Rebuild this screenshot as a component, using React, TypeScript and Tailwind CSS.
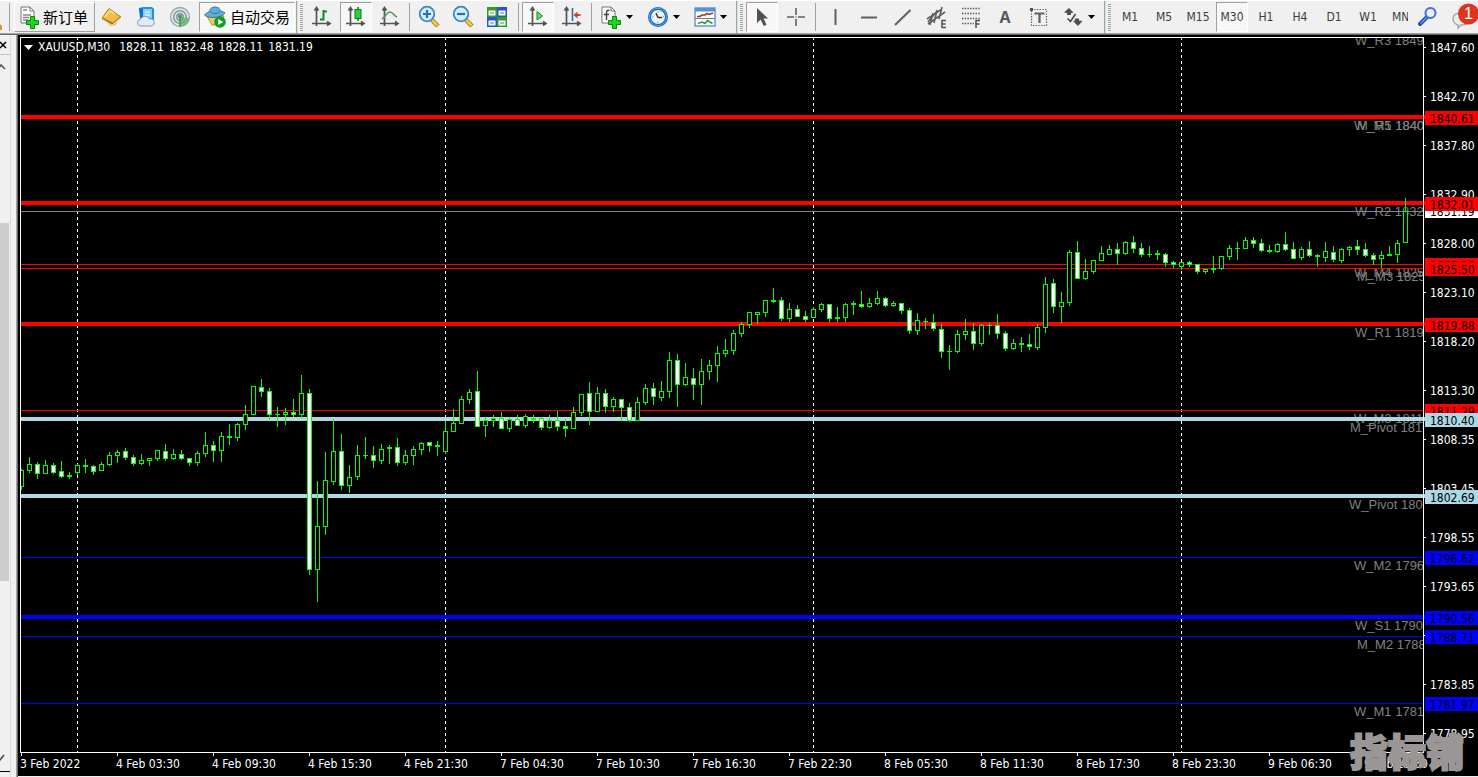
import type { ReactNode } from "react";

type Candle = [high: number, low: number, top: number, bottom: number, falling?: 1];

const FIRST_X = 21;
const STEP = 8;

const candles: Candle[] = [
  [469, 490, 470, 487], [457, 473, 464, 471], [462, 479, 464, 474, 1], [460, 474, 465, 474],
  [463, 474, 465, 473, 1], [461, 478, 471, 477, 1], [472, 479, 475, 477], [464, 475, 465, 473],
  [459, 473, 465, 467], [465, 475, 466, 472, 1], [462, 471, 464, 471], [452, 466, 455, 465],
  [450, 463, 452, 456], [448, 460, 451, 458, 1], [455, 466, 457, 464, 1], [454, 465, 460, 464],
  [458, 466, 458, 461], [450, 461, 450, 459], [444, 461, 451, 459, 1], [449, 460, 454, 459],
  [450, 460, 454, 459, 1], [458, 466, 458, 463, 1], [451, 466, 453, 463], [432, 457, 445, 454],
  [441, 462, 445, 451, 1], [432, 462, 436, 451], [424, 445, 436, 438], [423, 441, 424, 438],
  [405, 430, 414, 425], [386, 415, 386, 415], [379, 397, 387, 392, 1], [388, 420, 391, 415, 1],
  [407, 427, 414, 415], [408, 425, 412, 415], [399, 417, 412, 415, 1], [375, 418, 393, 415],
  [389, 575, 393, 570, 1], [481, 602, 526, 570], [452, 535, 480, 527], [419, 485, 451, 482],
  [434, 490, 451, 486, 1], [465, 493, 477, 486], [445, 480, 455, 477], [437, 459, 455, 456],
  [446, 468, 455, 461, 1], [444, 464, 449, 461], [445, 464, 447, 449], [438, 466, 447, 463, 1],
  [450, 465, 455, 463], [446, 465, 449, 456], [442, 455, 443, 450], [442, 452, 442, 446, 1],
  [441, 456, 445, 447], [421, 454, 431, 452], [409, 432, 423, 432], [396, 424, 399, 424],
  [389, 404, 392, 400], [371, 427, 391, 427, 1], [417, 437, 420, 426], [415, 427, 418, 421],
  [412, 429, 418, 429, 1], [417, 432, 419, 429], [415, 426, 419, 426, 1], [414, 428, 416, 426],
  [415, 423, 418, 420], [417, 430, 418, 428, 1], [415, 429, 420, 428], [411, 431, 420, 427, 1],
  [419, 437, 426, 429, 1], [407, 429, 412, 429], [394, 416, 394, 413], [382, 425, 393, 412, 1],
  [387, 412, 393, 412], [389, 413, 393, 407, 1], [397, 412, 399, 407], [399, 421, 399, 408, 1],
  [403, 422, 407, 421, 1], [397, 421, 402, 421], [384, 405, 388, 403], [383, 405, 388, 397, 1],
  [381, 401, 391, 398], [352, 398, 360, 392], [354, 407, 360, 385, 1], [363, 386, 377, 385],
  [368, 400, 378, 385, 1], [359, 405, 371, 385], [360, 380, 365, 372], [346, 382, 353, 366],
  [339, 357, 350, 354], [330, 355, 333, 351], [322, 337, 324, 334], [312, 328, 312, 325],
  [312, 324, 312, 315], [300, 317, 300, 313], [288, 303, 300, 302], [297, 321, 300, 319, 1],
  [303, 322, 309, 319], [305, 317, 309, 317, 1], [311, 322, 316, 320, 1], [307, 318, 309, 318],
  [303, 312, 304, 310], [304, 322, 304, 319, 1], [307, 322, 317, 319], [303, 322, 304, 318],
  [301, 315, 303, 305], [291, 308, 304, 307, 1], [298, 308, 303, 307], [291, 305, 298, 304],
  [297, 307, 298, 306, 1], [301, 307, 303, 306], [303, 314, 303, 311, 1], [308, 334, 310, 331, 1],
  [313, 335, 320, 331], [318, 329, 321, 322], [314, 331, 322, 329, 1], [324, 358, 329, 352, 1],
  [345, 370, 351, 352], [330, 353, 334, 352], [319, 340, 331, 335], [323, 350, 331, 344, 1],
  [324, 346, 325, 344], [323, 335, 325, 326], [314, 339, 325, 334, 1], [331, 351, 333, 349, 1],
  [339, 350, 343, 349], [337, 352, 343, 345], [334, 350, 344, 347, 1], [324, 350, 327, 348],
  [277, 333, 284, 328], [279, 313, 283, 307, 1], [292, 323, 302, 307], [250, 306, 252, 303],
  [241, 279, 252, 279, 1], [259, 280, 271, 279], [260, 274, 260, 272], [246, 261, 253, 261],
  [245, 255, 249, 255], [243, 265, 249, 254, 1], [241, 255, 242, 254], [236, 253, 242, 249, 1],
  [243, 257, 248, 255, 1], [246, 257, 254, 255], [250, 260, 253, 255], [253, 267, 254, 263, 1],
  [261, 268, 262, 265, 1], [262, 270, 262, 267], [261, 267, 262, 265, 1], [264, 274, 264, 272, 1],
  [269, 274, 269, 272], [256, 273, 268, 270], [256, 270, 256, 269], [245, 260, 248, 257],
  [242, 260, 248, 249], [237, 249, 240, 249], [237, 248, 240, 244, 1], [239, 252, 243, 251, 1],
  [245, 253, 250, 252], [243, 253, 244, 252], [232, 251, 244, 250, 1], [242, 259, 249, 259, 1],
  [247, 260, 249, 258], [241, 257, 249, 256, 1], [254, 267, 255, 257], [242, 262, 251, 258],
  [246, 262, 252, 260, 1], [248, 263, 249, 261], [246, 256, 247, 250], [240, 255, 246, 250, 1],
  [243, 257, 249, 256, 1], [253, 265, 255, 260, 1], [251, 268, 255, 259], [246, 256, 254, 256],
  [240, 263, 243, 255], [198, 243, 211, 243],
];

const levels = [
  { y: 115, h: 4, color: "#ff0000" },
  { y: 201, h: 4, color: "#ff0000" },
  { y: 211, h: 1, color: "#778899" },
  { y: 264, h: 1, color: "#ff0000" },
  { y: 268, h: 1, color: "#ff0000" },
  { y: 322, h: 4, color: "#ff0000" },
  { y: 410, h: 1, color: "#ff0000" },
  { y: 417, h: 4, color: "#add8e6" },
  { y: 494, h: 4, color: "#add8e6" },
  { y: 557, h: 1, color: "#0000ff" },
  { y: 615, h: 4, color: "#0000ff" },
  { y: 636, h: 1, color: "#0000ff" },
  { y: 703, h: 1, color: "#0000ff" },
];

// x is the distance from the right edge of the plot
const pivots = [
  { t: "W_R3 1849.20", x: -68, y: 45 },
  { t: "W_M5 1840.61", x: -69, y: 130 },
  { t: "M_R1 1840.61", x: -66, y: 130 },
  { t: "W_R2 1832.01", x: -68, y: 216 },
  { t: "W_M4 1825.95", x: -69, y: 277 },
  { t: "M_M3 1825.50", x: -66, y: 281 },
  { t: "W_R1 1819.88", x: -68, y: 337 },
  { t: "W_M3 1811.29", x: -69, y: 423 },
  { t: "M_Pivot 1810.40", x: -73, y: 432 },
  { t: "W_Pivot 1802.69", x: -74, y: 509 },
  { t: "W_M2 1796.62", x: -69, y: 570 },
  { t: "W_S1 1790.56", x: -68, y: 630 },
  { t: "M_M2 1788.71", x: -66, y: 649 },
  { t: "W_M1 1781.97", x: -69, y: 716 },
];

const ticks = [
  "1847.60", "1842.70", "1837.80", "1832.90", "1828.00", "1823.10", "1818.20", "1813.30",
  "1808.35", "1803.45", "1798.55", "1793.65", "1788.75", "1783.85", "1778.95",
];

const tags = [
  { t: "1840.61", y: 111, color: "#ff0000" },
  { t: "1831.19", y: 204, color: "#ffffff" },
  { t: "1832.01", y: 197, color: "#ff0000" },
  { t: "1825.95", y: 258, color: "#ff0000" },
  { t: "1825.50", y: 262, color: "#ff0000" },
  { t: "1819.88", y: 318, color: "#ff0000" },
  { t: "1811.29", y: 404, color: "#ff0000" },
  { t: "1810.40", y: 413, color: "#add8e6" },
  { t: "1802.69", y: 490, color: "#add8e6" },
  { t: "1796.62", y: 551, color: "#0000ff" },
  { t: "1790.56", y: 611, color: "#0000ff" },
  { t: "1788.71", y: 630, color: "#0000ff" },
  { t: "1781.97", y: 697, color: "#0000ff" },
];

const times = [
  "3 Feb 2022", "4 Feb 03:30", "4 Feb 09:30", "4 Feb 15:30", "4 Feb 21:30", "7 Feb 04:30",
  "7 Feb 10:30", "7 Feb 16:30", "7 Feb 22:30", "8 Feb 05:30", "8 Feb 11:30", "8 Feb 17:30",
  "8 Feb 23:30", "9 Feb 06:30", "9 Feb 12:30",
];

const UI = "font-['DejaVu_Sans_Condensed','Noto_Sans',sans-serif]";

function Icon({ children }: { children: ReactNode }) {
  return (
    <svg viewBox="0 0 24 24" className="size-6 shrink-0" fill="none" aria-hidden="true">
      {children}
    </svg>
  );
}

const pressedLook =
  "border border-t-[#a0a0a0] border-l-[#a0a0a0] border-r-white border-b-white bg-[#f7f7f7]";

function Tool({ label, pressed, children }: { label: string; pressed?: boolean; children: ReactNode }) {
  return (
    <div className="flex h-full w-[34px] shrink-0 items-center">
      <button
        type="button"
        aria-label={label}
        aria-pressed={pressed}
        className={`flex h-[30px] w-8 items-center justify-center ${pressed ? pressedLook : ""}`}
      >
        {children}
      </button>
    </div>
  );
}

function Menu({ label, children }: { label: string; children: ReactNode }) {
  return (
    <button type="button" aria-label={label} className="flex h-full w-[47px] shrink-0 items-center gap-[3px] pl-1">
      {children}
      <svg viewBox="0 0 7 4" className="h-1 w-[7px]" aria-hidden="true">
        <path d="M0 0h7L3.500 4z" fill="#000" />
      </svg>
    </button>
  );
}

const Sep = ({ wide }: { wide?: boolean }) => (
  <div className={`h-[28px] w-px shrink-0 bg-[#a0a0a0] ${wide ? "mx-[3px]" : "ml-px mr-[3px]"}`} />
);

const Grip = () => (
  <div className="flex h-full shrink-0 items-center">
    <div className="h-full w-px bg-[#a0a0a0]" />
    <div className="h-full w-px bg-[#cfe8d5]" />
    <div className="ml-[2px] mr-[3px] h-[27px] w-[3px] bg-[repeating-linear-gradient(to_bottom,#a0a0a0_0_1px,#f0f0f0_1px_2px)]" />
  </div>
);

const Axes = () => (
  <path d="M6.500 3v18M2 18.500h17M4.500 5.500l2-3 2 3M17 16.500l3 2-3 2" stroke="#555" strokeWidth="1.700" />
);

const Plus = () => (
  <path d="M13.500 11.500h4v4h4v4h-4v4h-4v-4h-4v-4h4z" fill="#1fd61f" stroke="#078a07" strokeWidth="1" />
);

function Magnifier({ plus }: { plus?: boolean }) {
  return (
    <Icon>
      <path d="M15 15l6 6" stroke="#a87b12" strokeWidth="4.500" />
      <path d="M15 15l5.500 5.500" stroke="#f3d13c" strokeWidth="2.500" />
      <circle cx="10" cy="9" r="7.300" fill="#d3edfb" stroke="#3c86c6" strokeWidth="1.800" />
      <path d={plus ? "M6 9h8M10 5v8" : "M6 9h8"} stroke="#2c6fae" strokeWidth="2.200" />
    </Icon>
  );
}

function Toolbar() {
  return (
    <header className="flex h-[33px] shrink-0 items-center overflow-hidden border-t border-white bg-[#f0f0f0]">
      <svg viewBox="0 0 9 32" className="h-8 w-[9px] shrink-0" aria-hidden="true">
        <path d="M0 23l2 2v4H0z" fill="#c79a35" />
      </svg>
      <div className="mr-1 h-7 w-px shrink-0 bg-[#a0a0a0]" />
      <button
        type="button"
        className="flex h-[30px] w-[81px] shrink-0 items-center gap-0.5 border border-t-white border-l-white border-r-[#a0a0a0] border-b-[#a0a0a0] pl-0.5 text-[15px] text-black font-['Noto_Sans_CJK_SC',sans-serif]"
      >
        <Icon>
          <path d="M4 2h9l4 4v12H4z" fill="#fff" stroke="#777" />
          <path d="M13 2v4h4" stroke="#777" />
          <path d="M6 5h4M6 10h8M6 12.500h6M6 15h5" stroke="#888" strokeWidth="1.300" />
          <Plus />
        </Icon>
        <span className="whitespace-nowrap">新订单</span>
      </button>
      <div className="w-px shrink-0" />
      <Tool label="市场报价">
        <Icon>
          <path d="M2 14l7-10 12 8-6 8-4 1z" fill="#a8741a" />
          <path d="M2 13L9 3.500l11.500 8.300L13 18z" fill="#f0bd45" stroke="#b27c16" />
          <path d="M5 12l5-6.500 5 3.800" stroke="#fbe093" strokeWidth="1.500" />
          <path d="M3 15l9 5.500 8.500-7" stroke="#f6e7bd" strokeWidth="1.200" />
        </Icon>
      </Tool>
      <Tool label="虚拟主机">
        <Icon>
          <path d="M5 3l4-1h9l2 2v11H7z" fill="#1f8ef0" />
          <path d="M9 4h9v9H9z" fill="#8dcdfc" />
          <path d="M5 3l4 1v10l-3-1z" fill="#0c6fd0" />
          <path d="M11 7h5M11 10h5" stroke="#fff" />
          <path d="M6 21a3.500 3.500 0 01.5-6.800A5 5 0 0115.500 14a3.600 3.600 0 012 7z" fill="#e4ebf5" stroke="#8299bd" />
        </Icon>
      </Tool>
      <Tool label="信号">
        <Icon>
          <circle cx="12" cy="12" r="9.500" fill="#dfe4e6" stroke="#9aa9b3" strokeWidth="1.300" />
          <circle cx="12" cy="12" r="6.300" stroke="#8698a5" strokeWidth="1.500" />
          <circle cx="12" cy="12" r="3.200" stroke="#7b91a0" strokeWidth="1.400" />
          <path d="M12 12l9.500 1A9.500 9.500 0 0112 21.500z" fill="#62b56d" opacity=".8" />
          <circle cx="12" cy="11.500" r="2" fill="#38a34a" />
          <path d="M12 12v9.500" stroke="#38a34a" strokeWidth="1.600" />
        </Icon>
      </Tool>
      <button
        type="button"
        aria-pressed="true"
        className={`mx-px flex h-[30px] w-[96px] shrink-0 items-center gap-[3px] pl-[3px] text-[15px] text-black font-['Noto_Sans_CJK_SC',sans-serif] ${pressedLook}`}
      >
        <Icon>
          <path d="M4 11l5 9h8l4-9z" fill="#f2cd57" stroke="#b98d1e" />
          <path d="M1.500 10c2-3 5-2 5.500-5 1-4 9-4 10 0 .6 2 3 1 5 3-3 5-17 6-20.500 2z" fill="#62add8" stroke="#2d78ab" />
          <path d="M7 7c3 2 7 2 10 0" stroke="#2d78ab" />
          <circle cx="17" cy="17" r="5.800" fill="#119c2c" />
          <path d="M15.200 14l5 3-5 3z" fill="#fff" />
        </Icon>
        <span className="whitespace-nowrap">自动交易</span>
      </button>

      <Grip />
      <Tool label="柱状图">
        <Icon>
          <Axes />
          <path d="M10 14.500h3.500V5M13.500 6.500H17" stroke="#128a22" strokeWidth="2" />
        </Icon>
      </Tool>
      <Tool label="蜡烛图" pressed>
        <Icon>
          <Axes />
          <path d="M14 2v14" stroke="#0c7a18" strokeWidth="1.600" />
          <rect x="11" y="4.500" width="6" height="9" fill="#2ccf3c" stroke="#0c7a18" />
        </Icon>
      </Tool>
      <Tool label="折线图">
        <Icon>
          <Axes />
          <path d="M4 14c3-2 5-7 8-7s4 4 7 5" stroke="#4a9c56" strokeWidth="1.600" />
        </Icon>
      </Tool>
      <Sep />
      <Tool label="放大"><Magnifier plus /></Tool>
      <Tool label="缩小"><Magnifier /></Tool>
      <Tool label="平铺窗口">
        <Icon>
          <path d="M2 2h10v10H2z" fill="#3c9a1c" />
          <path d="M12 2h10v10H12z" fill="#2358cf" />
          <path d="M2 12h10v10H2z" fill="#2358cf" />
          <path d="M12 12h10v10H12z" fill="#3c9a1c" />
          <path d="M3.500 5.500h7v5h-7zM13.500 5.500h7v5h-7zM3.500 15.500h7v5h-7zM13.500 15.500h7v5h-7z" fill="#f4f8ff" />
          <path d="M5 8h4M15 8h4M5 18h4M15 18h4" stroke="#8fb0a0" strokeWidth="1.500" />
        </Icon>
      </Tool>
      <Sep wide />
      <Tool label="自动滚动" pressed>
        <Icon>
          <Axes />
          <path d="M11 6.500l5.500 4.500-5.500 4z" fill="#5fe070" stroke="#118a22" />
        </Icon>
      </Tool>
      <Tool label="图表平移">
        <Icon>
          <Axes />
          <path d="M12.500 3v13" stroke="#1e6d9e" strokeWidth="1.500" />
          <path d="M13.500 10l4-3.500v2.500h3v2h-3v2.500z" fill="#c8421b" />
        </Icon>
      </Tool>
      <Sep />
      <Menu label="技术指标">
        <Icon>
          <path d="M3 2h9l4 4v12H3z" fill="#fff" stroke="#777" />
          <path d="M12 2v4h4" stroke="#777" />
          <path d="M10.500 5.500c-3-1-3 1-3 3V15M5 9.500h5" stroke="#444" strokeWidth="1.500" />
          <Plus />
        </Icon>
      </Menu>
      <Menu label="时段">
        <Icon>
          <circle cx="12" cy="12" r="10" fill="#1b67c2" />
          <circle cx="12" cy="12" r="8.700" stroke="#5aa7ee" />
          <circle cx="12" cy="12" r="7" fill="#f2f7fb" />
          <path d="M12 6v1.500M12 16.500V18M6 12h1.500M16.500 12H18" stroke="#888" />
          <path d="M10 8l2 4.500h4" stroke="#333" strokeWidth="1.400" />
        </Icon>
      </Menu>
      <Menu label="模板">
        <Icon>
          <rect x="2" y="3" width="20" height="18" fill="#fff" stroke="#4c84b8" strokeWidth="1.200" />
          <path d="M2 3h20v3.500H2z" fill="#4f94da" />
          <path d="M2 13.500h20" stroke="#4c84b8" />
          <path d="M4 11.500h3l2-1.500h3l2-1.500 2 1 4-1.500" stroke="#a33224" strokeWidth="1.600" />
          <path d="M5 18.500l4-1.500 3 1.500 2.500-3 5 3" stroke="#2e9a3c" strokeWidth="1.500" />
        </Icon>
      </Menu>

      <Grip />
      <Tool label="光标" pressed>
        <Icon>
          <path d="M7 3v15l3.700-3.500 3 6.500 2.800-1.200-3-6.300H18z" fill="#505050" />
        </Icon>
      </Tool>
      <Tool label="十字准线">
        <Icon>
          <path d="M12 3v7M12 14v7M3 12h7M14 12h7M11.500 12h1" stroke="#606060" strokeWidth="1.600" />
        </Icon>
      </Tool>
      <Sep />
      <Tool label="垂直线"><Icon><path d="M12.500 4v16" stroke="#606060" strokeWidth="2" /></Icon></Tool>
      <Tool label="水平线"><Icon><path d="M4 12.500h16" stroke="#606060" strokeWidth="2" /></Icon></Tool>
      <Tool label="趋势线"><Icon><path d="M4 20L19.500 5" stroke="#606060" strokeWidth="2" /></Icon></Tool>
      <Tool label="等距通道">
        <Icon>
          <path d="M2 14L17 4M3 19L20 7M5 20l3-12M9 18l3-13M14 14l3-12M3 17l9-11" stroke="#606060" strokeWidth="1.600" />
          <path d="M21 15.500h-4v7h4M17 19h3.500" stroke="#505050" strokeWidth="1.500" />
        </Icon>
      </Tool>
      <Tool label="斐波那契回调">
        <Icon>
          <path d="M3 3.500h18M3 8.500h18M3 13.500h18M3 18.500h12" stroke="#606060" strokeWidth="1.300" strokeDasharray="1.500 1.200" />
          <path d="M21 15.500h-4V23M17 19h3.500" stroke="#505050" strokeWidth="1.500" />
        </Icon>
      </Tool>
      <Tool label="文字">
        <span className="text-[16px] font-bold leading-6 text-[#5a5a5a] font-['Noto_Sans',sans-serif]">A</span>
      </Tool>
      <Tool label="文字标签">
        <Icon>
          <rect x="4.500" y="4.500" width="15" height="16" stroke="#606060" strokeWidth="1.200" strokeDasharray="1.400 1.300" />
          <path d="M7.500 8.500h10M12.500 8.500V18" stroke="#606060" strokeWidth="2.200" />
          <path d="M3 3h3v3H3z" fill="#505050" />
        </Icon>
      </Tool>
      <Menu label="箭头">
        <Icon>
          <path d="M3 7.500L8 3l4.500 4.500-2.500.5v2H6V8zM12 16l2-.5v-2h4v2l3.500.5-4.500 5z" fill="#505050" />
          <path d="M6.500 13.500l3 3 5-7.500" stroke="#505050" strokeWidth="1.700" />
        </Icon>
      </Menu>

      <Grip />
      {["M1", "M5", "M15", "M30", "H1", "H4", "D1", "W1"].map((f) => (
        <Tool key={f} label={f} pressed={f === "M30"}>
          <span className={`text-[12px] leading-6 text-[#3c3c3c] ${UI}`}>{f}</span>
        </Tool>
      ))}
      <button type="button" className={`w-[22px] shrink-0 overflow-hidden pl-[6px] text-left text-[12px] leading-6 text-[#3c3c3c] ${UI}`}>
        MN
      </button>
      <div className="ml-auto flex h-full shrink-0 items-center">
        <button type="button" aria-label="搜索" className="mr-1 flex w-[34px] justify-center">
          <Icon>
            <path d="M11 12l-7 7" stroke="#1d49b8" strokeWidth="4" strokeLinecap="round" />
            <path d="M10.500 12.500l-6 6" stroke="#6d9cf0" strokeWidth="1.500" />
            <circle cx="14.500" cy="8" r="5" fill="#e6eefb" stroke="#3f6fd3" strokeWidth="2" />
          </Icon>
        </button>
        <button type="button" aria-label="消息" className="relative flex h-8 w-[29px] items-center">
          <svg viewBox="0 0 29 32" className="h-8 w-[29px]" fill="none" aria-hidden="true">
            <path d="M4 18c0-4 3-6 8-6s9 2 9 6-4 6-9 6l-3 3v-3c-3-1-5-3-5-6z" fill="#ececec" stroke="#a8a8a8" strokeWidth="1.400" />
            <path d="M8 16c1-2 4-2 6-2" stroke="#fff" strokeWidth="2" />
            <circle cx="19.500" cy="13" r="10.500" fill="#de3420" />
          </svg>
          <span className="absolute left-[15px] top-0.5 text-[16px] leading-[22px] text-white font-['Liberation_Sans',sans-serif]">1</span>
        </button>
      </div>
    </header>
  );
}

function SidePanel() {
  return (
    <aside className="flex w-[18px] shrink-0 border-r border-[#696969] bg-[#f0f0f0]">
      <div className="flex w-[11px] flex-col border-r border-[#cfe0d4]">
        <button type="button" aria-label="关闭" className="flex h-5 items-center border-b border-[#b8c8bc]">
          <svg viewBox="0 0 10 10" className="size-[10px]" aria-hidden="true">
            <path d="M0 2l6 6M6 2L0 8" stroke="#000" strokeWidth="1.500" />
          </svg>
        </button>
        <svg viewBox="0 0 10 24" className="h-6 w-[10px]" fill="none" aria-hidden="true">
          <path d="M-2 14l3-4 4 4" stroke="#555" strokeWidth="1.600" />
        </svg>
        <div className="flex flex-1 flex-col">
          <div className="flex-[144]" />
          <div className="w-[9px] flex-[359] bg-[#cdcdcd]" />
          <div className="flex-[170]" />
        </div>
        <svg viewBox="0 0 10 20" className="h-5 w-[10px]" fill="none" aria-hidden="true">
          <path d="M-4 6l3 4 5-6" stroke="#555" strokeWidth="1.800" />
        </svg>
        <div className="mb-[5px] h-px bg-black" />
      </div>
      <div className="ml-[5px] w-px bg-[#a0a0a0]" />
    </aside>
  );
}

function Plot() {
  return (
    <div className="relative min-w-0 overflow-hidden border border-white">
      <svg className="absolute inset-0 size-full" shapeRendering="crispEdges" aria-label="XAUUSD M30">
        {[77, 445, 813, 1181].map((x) => (
          <line key={x} x1={x - 20.5} x2={x - 20.5} y1="-1" y2="100%" stroke="#fff" strokeDasharray="3 3" />
        ))}
        <svg x="100%" overflow="visible" className="text-[13px] font-['Liberation_Sans',sans-serif]">
          {pivots.map((p) => (
            <text key={p.t} x={p.x} y={p.y - 38} fill="#808080">
              {p.t}
            </text>
          ))}
        </svg>
        {levels.map((l) => (
          <rect key={l.y} x="0" y={l.y - 38} width="100%" height={l.h} fill={l.color} />
        ))}
        <g transform="translate(-21 -38)">
          {candles.map(([high, low, top, bottom, falling], i) => {
            const x = FIRST_X + i * STEP;
            return (
              <g key={x}>
                <rect x={x} y={high} width="1" height={low - high} fill="#00ff00" />
                <rect x={x - 2} y={top} width="5" height={bottom - top} fill="#00ff00" />
                {bottom - top > 2 && (
                  <rect x={x - 1} y={top + 1} width="3" height={bottom - top - 2} fill={falling ? "#fff" : "#000"} />
                )}
              </g>
            );
          })}
        </g>
      </svg>
      <div className={`relative flex items-center gap-[5px] pl-[3px] text-[12px] leading-[19px] text-white ${UI}`}>
        <svg viewBox="0 0 9 5" className="h-[5px] w-[9px]" aria-hidden="true">
          <path d="M0 0h9L4.500 5z" fill="#fff" />
        </svg>
        <span>XAUUSD,M30</span>
        <span className="flex gap-[5px] pl-1">
          <span>1828.11</span>
          <span>1832.48</span>
          <span>1828.11</span>
          <span>1831.19</span>
        </span>
      </div>
    </div>
  );
}

function PriceAxis() {
  return (
    <svg className={`size-full text-[12px] ${UI}`} aria-label="价格">
      <g transform="translate(-1424 -37)">
        {ticks.map((t, i) => (
          <g key={t} fill="#fff">
            <rect x="1424" y={47 + i * 49} width="2" height="1" />
            <text x="1430" y={52 + i * 49}>{t}</text>
          </g>
        ))}
        {levels.filter((l) => l.h > 1).map((l) => (
          <rect key={l.y} x="1424" y={l.y} width="1" height={l.h} fill={l.color} />
        ))}
        {tags.map((t) => (
          <g key={t.t}>
            <rect x="1425" y={t.y} width="53" height="14" fill={t.color} />
            <text x="1430" y={t.y + 12} fill="#000">{t.t}</text>
          </g>
        ))}
      </g>
    </svg>
  );
}

function TimeAxis() {
  return (
    <svg className={`size-full text-[12px] ${UI}`} fill="#fff" aria-label="时间">
      {times.map((t, i) => (
        <g key={t}>
          <rect x={1 + i * 96} y="0" width="1" height="3" />
          <text x={i * 96} y="15">{t}</text>
        </g>
      ))}
    </svg>
  );
}

export default function App() {
  return (
    <div className="flex h-screen flex-col overflow-hidden bg-[#f0f0f0]">
      <Toolbar />
      <div className="h-px shrink-0 bg-[#a0a0a0]" />
      <div className="h-px shrink-0 bg-[#696969]" />
      <div className="flex min-h-0 flex-1">
        <SidePanel />
        <main className="relative mb-px grid min-w-0 flex-1 grid-cols-[minmax(0,1fr)_54px] grid-rows-[minmax(0,1fr)_23px] bg-black pl-0.5 pt-0.5">
          <Plot />
          <PriceAxis />
          <div className="col-span-2 min-w-0">
            <TimeAxis />
          </div>
          <div className="absolute bottom-1.5 right-3.5 text-[38px] font-black leading-10 text-[#9a9696] [paint-order:stroke_fill] [-webkit-text-stroke:2px_#9a9696] font-['Noto_Sans_CJK_SC',sans-serif]">
            指标铺
          </div>
        </main>
      </div>
    </div>
  );
}
